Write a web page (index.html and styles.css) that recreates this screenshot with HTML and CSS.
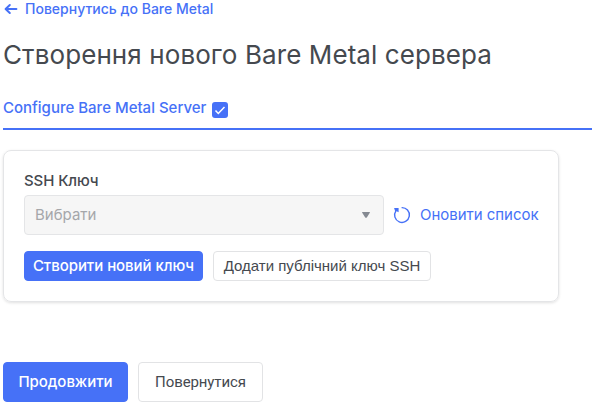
FILE: index.html
```html
<!DOCTYPE html>
<html lang="uk">
<head>
<meta charset="utf-8">
<title>Bare Metal</title>
<link rel="stylesheet" href="styles.css">
</head>
<body>
<main class="page">
  <a class="back">
    <svg class="back-icon" width="14" height="12" viewBox="0 0 14 12"><path d="M12.4 6H1.8M5.8 2L1.6 6L5.8 10"/></svg>
    <span>Повернутись до Bare Metal</span>
  </a>
  <h1 class="title">Створення нового Bare Metal сервера</h1>
  <div class="step">
    <span class="step-name">Configure Bare Metal Server</span>
    <span class="check"><svg width="16" height="16" viewBox="0 0 16 16"><path d="M3.5 8.5L6.3 11.5L12.5 5"/></svg></span>
  </div>
  <section class="card">
    <label class="label">SSH Ключ</label>
    <div class="row">
      <div class="select"><span>Вибрати</span><svg width="8" height="6" viewBox="0 0 8 6"><path d="M.5 0H7.5Q8.2 0 7.8.8L4.8 5.4Q4 6.2 3.2 5.4L.2.8Q-.2 0 .5 0Z"/></svg></div>
      <a class="refresh">
        <svg width="18" height="18" viewBox="0 0 18 18"><path class="ring" d="M8.6 1.6A7.4 7.4 0 1 1 2.9 4.8"/><path class="tip" d="M1.1 2.1H5.6V6.2L3.6 5.2L2.2 5.6Z"/></svg>
        <span>Оновити список</span>
      </a>
    </div>
    <div class="actions">
      <button class="btn primary create"><span>Створити новий ключ</span></button>
      <button class="btn outline add"><span>Додати публічний ключ SSH</span></button>
    </div>
  </section>
  <div class="footer">
    <button class="btn primary next"><span>Продовжити</span></button>
    <button class="btn outline return"><span>Повернутися</span></button>
  </div>
</main>
</body>
</html>
```
FILE: styles.css
```css
* { box-sizing: border-box; }
body { margin: 0; background: #fff; color: #495057; font-family: Inter, "Liberation Sans", sans-serif; overflow: hidden; }
svg { display: block; flex: none; }
span { white-space: nowrap; }
.page { padding-left: 3px; }
.back { display: flex; align-items: center; height: 18px; gap: 7px; padding-left: 1px; color: #4671f7; font-size: 14px; font-weight: 500; }
.back span { padding-bottom: 1px; }
.back-icon path { fill: none; stroke: #4671f7; stroke-width: 2; stroke-linecap: round; stroke-linejoin: round; }
.title { margin: 20px 0 0; height: 34px; line-height: 34px; font-size: 26px; font-weight: 400; letter-spacing: .09px; color: #45494f; white-space: nowrap; }
.step { display: flex; margin-top: 18px; height: 40px; padding-top: 8px; border-bottom: 2px solid #4671f7; color: #4671f7; }
.step-name { width: 209px; font-size: 15px; font-weight: 500; line-height: 20px; }
.check { width: 16px; height: 16px; margin-top: 4px; border-radius: 3px; background: #4671f7; }
.check path { fill: none; stroke: #fff; stroke-width: 1.5; }
.card { width: 556px; height: 152px; margin-top: 20px; padding: 20px; border: 1px solid #e4e5e7; border-radius: 8px; box-shadow: 0 1px 3px rgba(0, 0, 0, .12); }
.label { display: block; height: 24px; line-height: 20px; font-size: 15px; font-weight: 500; letter-spacing: -.1px; color: #45494f; }
.row { display: flex; align-items: center; gap: 9px; }
.select { display: flex; flex: none; align-items: center; justify-content: space-between; width: 360px; height: 40px; padding: 0 13px 0 10px; border: 1px solid #e4e5e7; border-radius: 4px; background: #f6f6f6; color: #a5a7aa; font-size: 15px; font-weight: 400; }
.select span { padding-bottom: 1px; }
.select path { fill: #858a92; }
.refresh { display: flex; align-items: center; gap: 9px; color: #4671f7; font-size: 15px; font-weight: 400; }
.refresh span { padding-bottom: 1px; letter-spacing: -.03px; }
.ring { fill: none; stroke: #4671f7; stroke-width: 1.4; }
.tip { fill: #4671f7; }
.actions { display: flex; gap: 10px; margin-top: 16px; }
.btn { display: flex; align-items: center; justify-content: center; padding: 0 0 1px; border: 1px solid #e2e3e5; border-radius: 4px; background: #fff; color: #45494f; font-family: inherit; font-size: 15px; }
.primary { border-color: #4671f7; background: #4671f7; color: #fff; font-weight: 500; letter-spacing: -.05px; }
.create { width: 179px; height: 30px; }
.add { width: 218px; height: 30px; font-family: "Liberation Sans", Arial, sans-serif; }
.footer { display: flex; gap: 10px; margin-top: 60px; }
.next, .return { width: 125px; height: 40px; }
.return { font-family: Roboto, sans-serif; padding-bottom: 0; letter-spacing: -.1px; }
```
